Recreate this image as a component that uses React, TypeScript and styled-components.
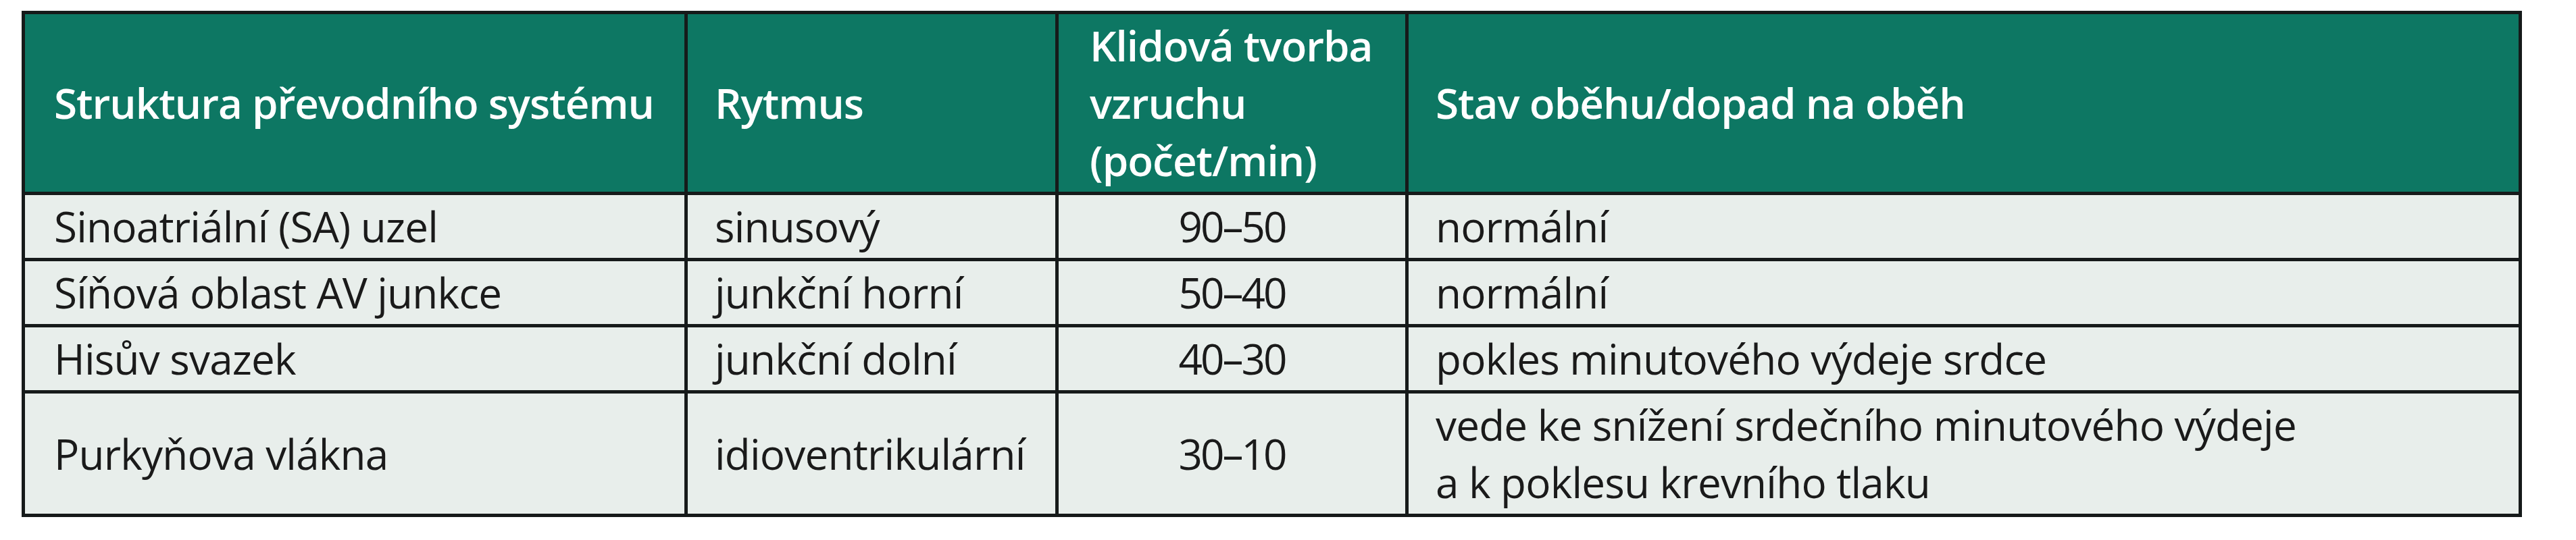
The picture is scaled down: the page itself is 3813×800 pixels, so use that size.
import React from 'react';
import styled, { createGlobalStyle } from 'styled-components';

const GlobalStyle = createGlobalStyle`
  body {
    margin: 0;
    background: #ffffff;
    font-family: "Open Sans", "Noto Sans", "Liberation Sans", sans-serif;
  }
`;

const Page = styled.div`
  padding: 16px 0 0 32px;
`;

const Table = styled.table`
  width: 3701px;
  table-layout: fixed;
  border-collapse: separate;
  border-spacing: 5px;
  background: #161a1a;
`;

const HeadCell = styled.th<{ $pad?: number }>`
  background: #0d7763;
  color: #ffffff;
  font-size: 62px;
  font-weight: 600;
  letter-spacing: -1px;
  line-height: 85px;
  white-space: nowrap;
  text-align: left;
  vertical-align: middle;
  padding: 4px 0 4px ${(p) => p.$pad ?? 40}px;
`;

const Cell = styled.td<{ $pad?: number; $center?: boolean }>`
  background: #e8eeeb;
  color: #1a1a1a;
  font-size: 62px;
  font-weight: 400;
  letter-spacing: ${(p) => (p.$center ? '-3px' : '-0.8px')};
  line-height: 85px;
  text-align: ${(p) => (p.$center ? 'center' : 'left')};
  vertical-align: middle;
  padding: 4px 0 4px ${(p) => (p.$center ? 0 : p.$pad ?? 40)}px;
`;

type Row = {
  structure: string;
  rhythm: string;
  rate: string;
  effect: React.ReactNode;
};

const rows: Row[] = [
  { structure: 'Sinoatriální (SA) uzel', rhythm: 'sinusový', rate: '90–50', effect: 'normální' },
  { structure: 'Síňová oblast AV junkce', rhythm: 'junkční horní', rate: '50–40', effect: 'normální' },
  { structure: 'Hisův svazek', rhythm: 'junkční dolní', rate: '40–30', effect: 'pokles minutového výdeje srdce' },
  {
    structure: 'Purkyňova vlákna',
    rhythm: 'idioventrikulární',
    rate: '30–10',
    effect: (
      <>
        vede ke snížení srdečního minutového výdeje
        <br />a k poklesu krevního tlaku
      </>
    ),
  },
];

const App: React.FC = () => {
  return (
    <Page>
      <GlobalStyle />
      <Table>
        <colgroup>
          <col style={{ width: 976 }} />
          <col style={{ width: 544 }} />
          <col style={{ width: 513 }} />
          <col style={{ width: 1643 }} />
        </colgroup>
        <thead>
          <tr>
            <HeadCell $pad={43}>Struktura převodního systému</HeadCell>
            <HeadCell>Rytmus</HeadCell>
            <HeadCell $pad={46}>
              Klidová tvorba
              <br />
              vzruchu
              <br />
              (počet/min)
            </HeadCell>
            <HeadCell>Stav oběhu/dopad na oběh</HeadCell>
          </tr>
        </thead>
        <tbody>
          {rows.map((r) => (
            <tr key={r.structure}>
              <Cell $pad={43}>{r.structure}</Cell>
              <Cell>{r.rhythm}</Cell>
              <Cell $center>{r.rate}</Cell>
              <Cell>{r.effect}</Cell>
            </tr>
          ))}
        </tbody>
      </Table>
    </Page>
  );
};

export default App;
